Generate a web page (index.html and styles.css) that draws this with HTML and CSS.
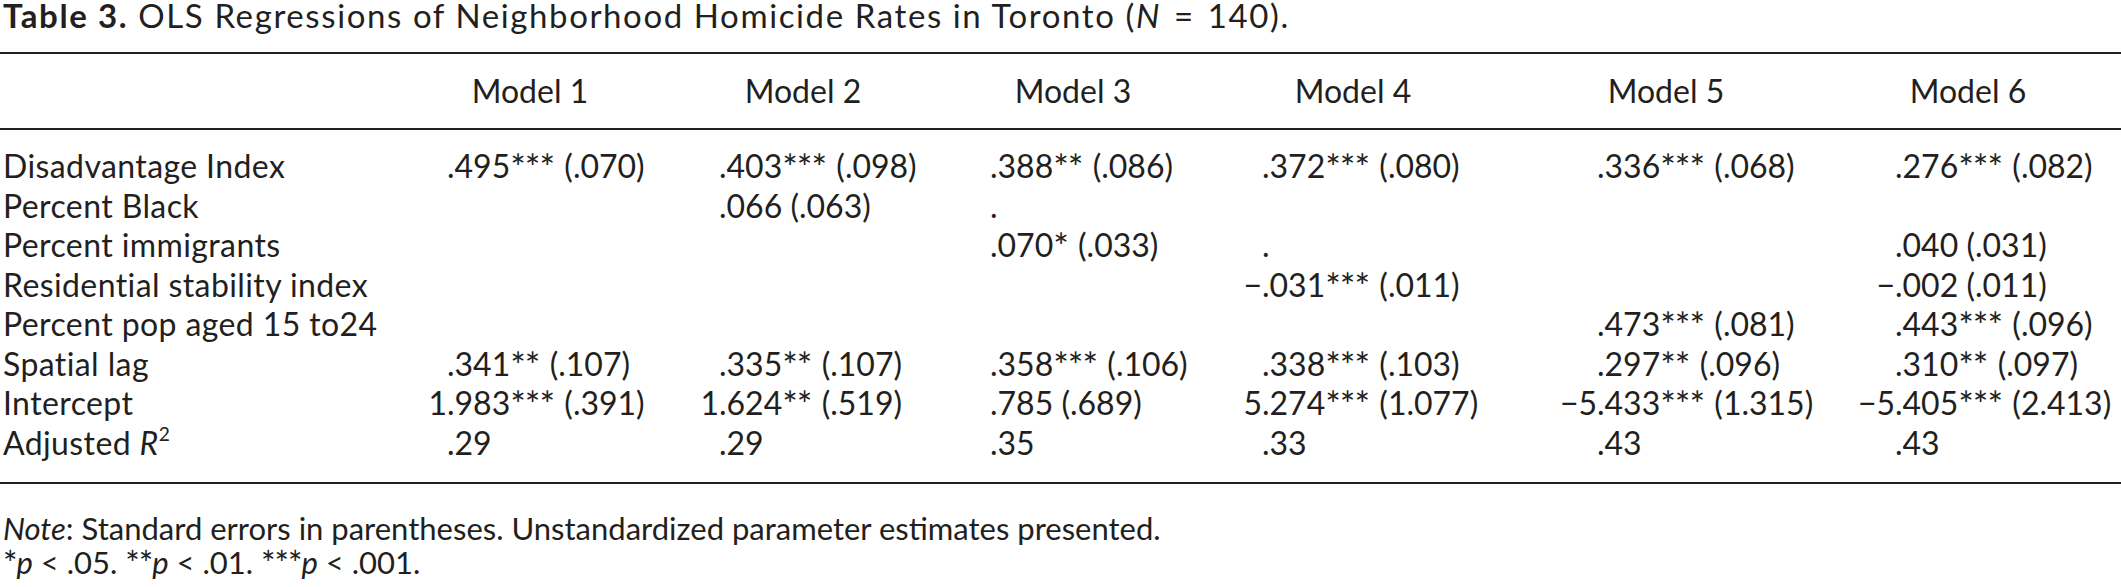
FILE: index.html
```html
<!DOCTYPE html>
<html lang="en">
<head>
<meta charset="utf-8">
<title>Table 3</title>
<link rel="stylesheet" href="styles.css">
</head>
<body>
<div class="page">
  <div class="title"><b>Table 3.</b> OLS Regressions of Neighborhood Homicide Rates in Toronto (<i>N</i> <span class="eq">=</span> 140).</div>
  <div class="table">
    <div class="grid thead">
      <span class="label"></span>
      <span class="head">Model 1</span>
      <span class="head">Model 2</span>
      <span class="head">Model 3</span>
      <span class="head">Model 4</span>
      <span class="head">Model 5</span>
      <span class="head">Model 6</span>
    </div>
    <div class="grid tbody">
      <span class="label">Disadvantage Index</span>
      <span class="int"></span><span class="frac">.495<span class="st">***</span> (.070)</span>
      <span class="int"></span><span class="frac">.403<span class="st">***</span> (.098)</span>
      <span class="int"></span><span class="frac">.388<span class="st">**</span> (.086)</span>
      <span class="int"></span><span class="frac">.372<span class="st">***</span> (.080)</span>
      <span class="int"></span><span class="frac">.336<span class="st">***</span> (.068)</span>
      <span class="int"></span><span class="frac">.276<span class="st">***</span> (.082)</span>

      <span class="label">Percent Black</span>
      <span class="int"></span><span class="frac"></span>
      <span class="int"></span><span class="frac">.066 (.063)</span>
      <span class="int"></span><span class="frac">.</span>
      <span class="int"></span><span class="frac"></span>
      <span class="int"></span><span class="frac"></span>
      <span class="int"></span><span class="frac"></span>

      <span class="label">Percent immigrants</span>
      <span class="int"></span><span class="frac"></span>
      <span class="int"></span><span class="frac"></span>
      <span class="int"></span><span class="frac">.070<span class="st">*</span> (.033)</span>
      <span class="int"></span><span class="frac">.</span>
      <span class="int"></span><span class="frac"></span>
      <span class="int"></span><span class="frac">.040 (.031)</span>

      <span class="label">Residential stability index</span>
      <span class="int"></span><span class="frac"></span>
      <span class="int"></span><span class="frac"></span>
      <span class="int"></span><span class="frac"></span>
      <span class="int">&minus;</span><span class="frac">.031<span class="st">***</span> (.011)</span>
      <span class="int"></span><span class="frac"></span>
      <span class="int">&minus;</span><span class="frac">.002 (.011)</span>

      <span class="label">Percent pop aged 15 to24</span>
      <span class="int"></span><span class="frac"></span>
      <span class="int"></span><span class="frac"></span>
      <span class="int"></span><span class="frac"></span>
      <span class="int"></span><span class="frac"></span>
      <span class="int"></span><span class="frac">.473<span class="st">***</span> (.081)</span>
      <span class="int"></span><span class="frac">.443<span class="st">***</span> (.096)</span>

      <span class="label">Spatial lag</span>
      <span class="int"></span><span class="frac">.341<span class="st">**</span> (.107)</span>
      <span class="int"></span><span class="frac">.335<span class="st">**</span> (.107)</span>
      <span class="int"></span><span class="frac">.358<span class="st">***</span> (.106)</span>
      <span class="int"></span><span class="frac">.338<span class="st">***</span> (.103)</span>
      <span class="int"></span><span class="frac">.297<span class="st">**</span> (.096)</span>
      <span class="int"></span><span class="frac">.310<span class="st">**</span> (.097)</span>

      <span class="label">Intercept</span>
      <span class="int">1</span><span class="frac">.983<span class="st">***</span> (.391)</span>
      <span class="int">1</span><span class="frac">.624<span class="st">**</span> (.519)</span>
      <span class="int"></span><span class="frac">.785 (.689)</span>
      <span class="int">5</span><span class="frac">.274<span class="st">***</span> (1.077)</span>
      <span class="int">&minus;5</span><span class="frac">.433<span class="st">***</span> (1.315)</span>
      <span class="int">&minus;5</span><span class="frac">.405<span class="st">***</span> (2.413)</span>

      <span class="label">Adjusted <i>R</i><sup class="sq">2</sup></span>
      <span class="int"></span><span class="frac">.29</span>
      <span class="int"></span><span class="frac">.29</span>
      <span class="int"></span><span class="frac">.35</span>
      <span class="int"></span><span class="frac">.33</span>
      <span class="int"></span><span class="frac">.43</span>
      <span class="int"></span><span class="frac">.43</span>
    </div>
  </div>
  <div class="notes">
    <p><i>Note</i>: Standard errors in parentheses. Unstandardized parameter estimates presented.</p>
    <p><span class="nst">*</span><i>p</i> &lt; .05. <span class="nst">**</span><i>p</i> &lt; .01. <span class="nst">***</span><i>p</i> &lt; .001.</p>
  </div>
</div>
</body>
</html>
```

FILE: styles.css
```css
html, body {
  margin: 0;
  padding: 0;
  background: #ffffff;
}

.page {
  width: 2121px;
  font-family: Lato, "Open Sans", sans-serif;
  font-size: 32px;
  color: #231f20;
}

.title {
  font-size: 33px;
  line-height: 36px;
  letter-spacing: 1.6px;
  padding-left: 3px;
  margin-top: -3px;
  margin-bottom: 19px;
  white-space: nowrap;
}

.title b {
  font-weight: 700;
  letter-spacing: 1.6px;
}

.title .eq {
  padding: 0 3px;
}

.table {
  border-top: 2px solid #231f20;
  border-bottom: 2px solid #231f20;
}

.grid {
  display: grid;
  grid-template-columns: 388px 59px 225px 47px 215px 56px 222px 50px 232px 103px 241px 57px 203px;
  white-space: nowrap;
}

.thead {
  padding: 17px 0;
  line-height: 40px;
  border-bottom: 2px solid #231f20;
}

.tbody {
  padding: 16px 0 20px;
  line-height: 39.5px;
}

.label {
  padding-left: 3px;
  letter-spacing: 0.4px;
}

.head {
  grid-column: span 2;
  text-align: center;
}

.int {
  text-align: right;
}

.frac {
  text-align: left;
}

.st {
  font-size: 1.15em;
  line-height: 0;
  position: relative;
  top: 3px;
  letter-spacing: -1px;
  padding-right: 2px;
}

.sq {
  font-size: 0.6em;
  line-height: 0;
  vertical-align: 0.75em;
}

.notes {
  padding-left: 3px;
  padding-top: 27px;
  font-size: 31px;
}

.notes p {
  margin: 0;
  line-height: 34px;
  white-space: nowrap;
}

.nst {
  font-size: 1.1em;
  line-height: 0;
  position: relative;
  top: 2px;
  letter-spacing: -1px;
}
```
